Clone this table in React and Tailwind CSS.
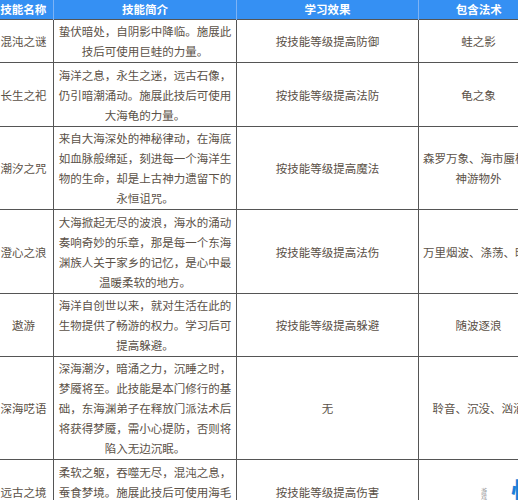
import React from 'react';

const rows = [
  {
    name: '混沌之谜',
    intro: ['蛰伏暗处，自阴影中降临。施展此', '技后可使用巨蛙的力量。'],
    effect: '按技能等级提高防御',
    spells: ['蛙之影'],
    h: 'h-[43px]',
  },
  {
    name: '长生之祀',
    intro: ['海洋之息，永生之迷，远古石像，', '仍引暗潮涌动。施展此技后可使用', '大海龟的力量。'],
    effect: '按技能等级提高法防',
    spells: ['龟之象'],
    h: 'h-[64px]',
  },
  {
    name: '潮汐之咒',
    intro: ['来自大海深处的神秘律动，在海底', '如血脉般绵延，刻进每一个海洋生', '物的生命，却是上古神力遗留下的', '永恒诅咒。'],
    effect: '按技能等级提高魔法',
    spells: ['森罗万象、海市蜃楼、', '神游物外'],
    h: 'h-[83px]',
  },
  {
    name: '澄心之浪',
    intro: ['大海掀起无尽的波浪，海水的涌动', '奏响奇妙的乐章，那是每一个东海', '渊族人关于家乡的记忆，是心中最', '温暖柔软的地方。'],
    effect: '按技能等级提高法伤',
    spells: ['万里烟波、涤荡、暗涌'],
    h: 'h-[84px]',
  },
  {
    name: '遨游',
    intro: ['海洋自创世以来，就对生活在此的', '生物提供了畅游的权力。学习后可', '提高躲避。'],
    effect: '按技能等级提高躲避',
    spells: ['随波逐浪'],
    h: 'h-[63px]',
  },
  {
    name: '深海呓语',
    intro: ['深海潮汐，暗涌之力，沉睡之时，', '梦魇将至。此技能是本门修行的基', '础，东海渊弟子在释放门派法术后', '将获得梦魇，需小心提防，否则将', '陷入无边沉眠。'],
    effect: '无',
    spells: ['聆音、沉没、汹涌'],
    h: 'h-[103px]',
  },
  {
    name: '远古之境',
    intro: ['柔软之躯，吞噬无尽，混沌之息，', '蚕食梦境。施展此技后可使用海毛', '虫的力量。'],
    effect: '按技能等级提高伤害',
    spells: null,
    h: 'h-[64px]',
  },
];

export default function App() {
  return (
    <div
      className="w-[518px] h-[500px] overflow-hidden bg-white"
      style={{ fontFamily: '"Noto Sans CJK SC", "Noto Sans", sans-serif' }}
    >
      <table className="table-fixed border-collapse ml-[-7px] w-[545px] text-[11.5px] leading-[20px] text-[#5b5147]">
        <colgroup>
          <col className="w-[60px]" />
          <col className="w-[183px]" />
          <col className="w-[182px]" />
          <col className="w-[120px]" />
        </colgroup>
        <thead>
          <tr className="h-[19px] bg-[#3590f3] text-white font-bold">
            <th className="border-r border-[#7db3f5] text-center leading-[19px] p-0">技能名称</th>
            <th className="border-r border-[#7db3f5] text-center leading-[19px] p-0">技能简介</th>
            <th className="border-r border-[#7db3f5] text-center leading-[19px] p-0">学习效果</th>
            <th className="text-center leading-[19px] p-0">包含法术</th>
          </tr>
        </thead>
        <tbody>
          {rows.map((row) => (
            <tr key={row.name} className={row.h}>
              <td className="border border-[#555] text-center align-middle p-0">{row.name}</td>
              <td className="border border-[#555] text-center align-middle px-1 py-0">
                {row.intro.map((line) => (
                  <div key={line} className="whitespace-nowrap">{line}</div>
                ))}
              </td>
              <td className="border border-[#555] text-center align-middle p-0">{row.effect}</td>
              {row.spells ? (
                <td className="border border-[#555] text-center align-middle px-[4px] py-0">
                  {row.spells.map((line) => (
                    <div key={line} className="whitespace-nowrap">{line}</div>
                  ))}
                </td>
              ) : (
                <td className="border border-[#555] border-l-[#8a7658] align-middle p-0">
                  <div className="flex items-center h-[60px] pl-[62px] gap-[24px]">
                    <span className="text-[6px] leading-none text-[#9a9a9a] mt-[10px]">游戏网</span>
                    <span className="text-[30px] leading-none font-bold text-[#1a7fd8]">恒</span>
                  </div>
                </td>
              )}
            </tr>
          ))}
        </tbody>
      </table>
    </div>
  );
}
